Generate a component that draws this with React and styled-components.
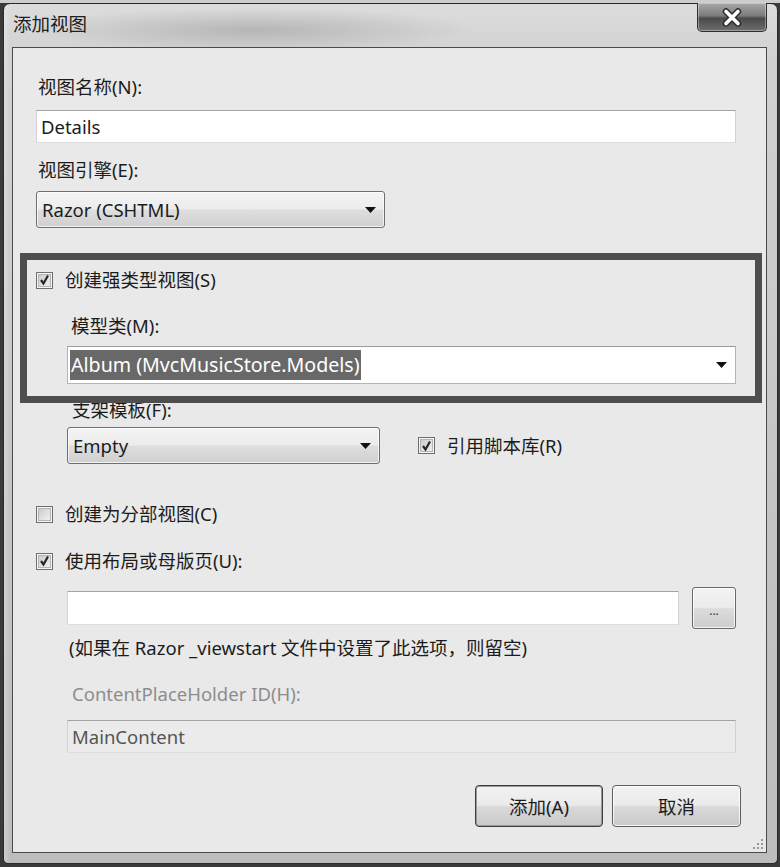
import React from 'react';
import styled, { createGlobalStyle } from 'styled-components';

const Global = createGlobalStyle`
  html, body { margin: 0; padding: 0; }
  body {
    background: #3a3a3a;
    font-family: "Noto Sans", "Noto Sans CJK SC", sans-serif;
    color: #1c1c1c;
  }
  #root { width: 780px; height: 867px; }
`;

const FS = 18.5;

const Stage = styled.div`
  width: 780px;
  height: 867px;
  box-sizing: border-box;
  padding: 3px 2px 3px 3px;
  background: linear-gradient(180deg, #cdcdcd 0, #cdcdcd 3px, #3a3a3a 3px);
`;

const Window = styled.div`
  height: 100%;
  box-sizing: border-box;
  border: 1px solid #2a2a2a;
  border-radius: 7px 7px 5px 5px;
  background:
    radial-gradient(ellipse 220px 22px at 250px 26px, rgba(120,120,120,0.35), rgba(120,120,120,0) 100%),
    linear-gradient(90deg, rgba(255,255,255,0.25) 0, rgba(0,0,0,0) 6px),
    linear-gradient(180deg, #dcdcdc 0%, #d2d2d2 6%, #c4c4c4 60%, #bdbdbd 100%);
  padding: 0 10px 10px 8px;
  display: flex;
  flex-direction: column;
`;

const TitleBar = styled.div`
  height: 43px;
  display: flex;
  align-items: flex-start;
  flex-shrink: 0;
`;

const TitleText = styled.div`
  padding: 8px 0 0 1px;
  font-size: ${FS}px;
  line-height: 24px;
  color: #202020;
`;

const CloseBtn = styled.div`
  margin-left: auto;
  margin-top: -1px;
  width: 70px;
  height: 29px;
  box-sizing: border-box;
  border: 1px solid #2e2e2e;
  border-top: none;
  border-radius: 0 0 5px 5px;
  background: linear-gradient(180deg, #a8a8a8 0%, #7c7c7c 45%, #4a4a4a 55%, #6e6e6e 100%);
  box-shadow: inset 0 0 0 1px rgba(255,255,255,0.35);
  display: flex;
  align-items: center;
  justify-content: center;
`;

const Client = styled.div`
  flex: 1;
  position: relative;
  background: #e9e9e9;
  border: 1px solid #4a4a4a;
  padding: 27px 30px 25px 23px;
  display: flex;
  flex-direction: column;
`;

const Label = styled.div`
  margin-top: ${p => p.$mt || 0}px;
  padding-left: ${p => (p.$pl ?? 2)}px;
  font-size: ${FS}px;
  line-height: 24px;
  height: 24px;
  color: ${p => (p.$disabled ? '#8d8d8d' : '#1c1c1c')};
  white-space: nowrap;
`;

const TextBox = styled.div`
  margin-top: ${p => p.$mt || 0}px;
  height: ${p => p.$h || 33}px;
  width: ${p => (p.$w ? `${p.$w}px` : 'auto')};
  box-sizing: border-box;
  border: 1px solid #d2d2d2;
  border-top-color: #a3a3a3;
  border-bottom-color: #dedede;
  background: ${p => (p.$disabled ? '#ebebeb' : '#ffffff')};
  color: ${p => (p.$disabled ? '#555555' : '#1c1c1c')};
  font-size: ${FS}px;
  display: flex;
  align-items: center;
  padding-left: 4px;
  flex-shrink: 0;
`;

const DropDown = styled.div`
  margin-top: ${p => p.$mt || 0}px;
  width: ${p => p.$w}px;
  height: 37px;
  box-sizing: border-box;
  border: 1px solid #6f6f6f;
  border-radius: 3px;
  background: linear-gradient(180deg, #f4f4f4 0%, #ececec 48%, #dedede 52%, #cfcfcf 100%);
  box-shadow: inset 0 0 0 1px rgba(255,255,255,0.7);
  display: flex;
  align-items: center;
  padding: 0 8px 0 5px;
  font-size: ${FS}px;
  color: #1c1c1c;
  flex-shrink: 0;
`;

const Combo = styled.div`
  margin-top: ${p => p.$mt || 0}px;
  height: 38px;
  box-sizing: border-box;
  border: 1px solid #b4b4b4;
  border-top-color: #9a9a9a;
  background: #ffffff;
  display: flex;
  align-items: center;
  padding: 2px 8px 2px 2px;
  font-size: 19.6px;
`;

const Selected = styled.span`
  background: #686868;
  color: #ffffff;
  height: 30px;
  line-height: 30px;
  padding: 0 1px;
`;

const Grow = styled.span`
  flex: 1;
`;

const ArrowSvg = styled.svg`
  display: block;
  flex-shrink: 0;
`;

const Arrow = () => (
  <ArrowSvg width="11" height="6" viewBox="0 0 11 6">
    <polygon points="0,0 11,0 5.5,6" fill="#111" />
  </ArrowSvg>
);

const CheckRow = styled.div`
  margin-top: ${p => p.$mt || 0}px;
  height: 24px;
  display: flex;
  align-items: center;
  gap: 12px;
  font-size: ${FS}px;
  line-height: 24px;
  white-space: nowrap;
  flex-shrink: 0;
`;

const Box = styled.span`
  width: 17px;
  height: 17px;
  box-sizing: border-box;
  border: 1px solid #6e6e6e;
  background: linear-gradient(135deg, #c4c4c4 0%, #e4e4e4 60%, #f2f2f2 100%);
  box-shadow: inset 0 0 0 1px #f6f6f6, inset 0 0 0 2px #b4b4b4;
  display: flex;
  align-items: center;
  justify-content: center;
  flex-shrink: 0;
`;

const CheckBox = ({ checked, children, ...rest }) => (
  <CheckRow {...rest}>
    <Box>
      {checked && (
        <svg width="11" height="12" viewBox="0 0 11 12">
          <path d="M2 6 L4.5 9.5 L9 1.5" fill="none" stroke="#262626" strokeWidth="2.2" />
        </svg>
      )}
    </Box>
    <span>{children}</span>
  </CheckRow>
);

const Section = styled.div`
  position: relative;
  margin-top: ${p => p.$mt || 0}px;
  display: flex;
  flex-direction: column;
`;

const Indent = styled.div`
  padding-left: 31px;
  display: flex;
  flex-direction: column;
`;

const Frame = styled.div`
  position: absolute;
  left: -16px;
  right: -26px;
  top: -15px;
  bottom: -19px;
  border: 7px solid #4e4e4e;
  pointer-events: none;
  z-index: 2;
`;

const Row = styled.div`
  margin-top: ${p => p.$mt || 0}px;
  display: flex;
  align-items: center;
  gap: ${p => p.$gap || 0}px;
`;

const SmallBtn = styled.div`
  width: 44px;
  height: 42px;
  box-sizing: border-box;
  border: 1px solid #6a6a6a;
  border-radius: 3px;
  background: linear-gradient(180deg, #f3f3f3 0%, #ececec 48%, #dcdcdc 52%, #cdcdcd 100%);
  box-shadow: inset 0 0 0 1px rgba(255,255,255,0.75);
  display: flex;
  align-items: center;
  justify-content: center;
  font-size: 12px;
  padding-top: 4px;
  color: #333;
  flex-shrink: 0;
`;

const Buttons = styled.div`
  margin-top: auto;
  margin-right: -5px;
  display: flex;
  justify-content: flex-end;
  gap: 9px;
`;

const Button = styled.div`
  width: ${p => p.$w}px;
  height: 42px;
  box-sizing: border-box;
  border: 1px solid ${p => (p.$default ? '#3e3e3e' : '#5e5e5e')};
  border-radius: 4px;
  background: linear-gradient(180deg, #f2f2f2 0%, #eaeaea 48%, #d9d9d9 52%, #c9c9c9 100%);
  box-shadow: inset 0 0 0 1px ${p => (p.$default ? '#9a9a9a' : 'rgba(255,255,255,0.8)')};
  display: flex;
  align-items: center;
  justify-content: center;
  font-size: ${FS}px;
  color: #1c1c1c;
`;

const Grip = styled.svg`
  position: absolute;
  right: 2px;
  bottom: 2px;
`;

export default function App() {
  return (
    <Stage>
      <Global />
      <Window>
        <TitleBar>
          <TitleText>添加视图</TitleText>
          <CloseBtn>
            <svg width="22" height="19" viewBox="0 0 22 19">
              <path d="M5 3.5 L17 15.5 M17 3.5 L5 15.5" stroke="#2a2a2a" strokeWidth="6.5" strokeLinecap="round" fill="none" />
              <path d="M5 3.5 L17 15.5 M17 3.5 L5 15.5" stroke="#ffffff" strokeWidth="3.6" strokeLinecap="round" fill="none" />
            </svg>
          </CloseBtn>
        </TitleBar>
        <Client>
          <Label>视图名称(N):</Label>
          <TextBox $mt={11}>Details</TextBox>
          <Label $mt={15}>视图引擎(E):</Label>
          <DropDown $mt={9} $w={349}>
            <span>Razor (CSHTML)</span>
            <Grow />
            <Arrow />
          </DropDown>

          <Section $mt={40}>
            <CheckBox checked>创建强类型视图(S)</CheckBox>
            <Indent>
              <Label $mt={22} $pl={4}>模型类(M):</Label>
              <Combo $mt={8}>
                <Selected>Album (MvcMusicStore.Models)</Selected>
                <Grow />
                <Arrow />
              </Combo>
            </Indent>
            <Frame />
          </Section>

          <Indent>
            <Label $mt={14} $pl={5}>支架模板(F):</Label>
            <Row $mt={5} $gap={38}>
              <DropDown $w={313}>
                <span>Empty</span>
                <Grow />
                <Arrow />
              </DropDown>
              <CheckBox checked>引用脚本库(R)</CheckBox>
            </Row>
          </Indent>

          <CheckBox $mt={38}>创建为分部视图(C)</CheckBox>
          <CheckBox $mt={23} checked>使用布局或母版页(U):</CheckBox>

          <Indent>
            <Row $mt={14} $gap={13}>
              <TextBox $w={612} $h={34} />
              <SmallBtn>...</SmallBtn>
            </Row>
            <Label $mt={7} $pl={2}>(如果在 Razor _viewstart 文件中设置了此选项，则留空)</Label>
            <Label $mt={22} $pl={5} $disabled>ContentPlaceHolder ID(H):</Label>
            <TextBox $mt={14} $disabled>MainContent</TextBox>
          </Indent>

          <Buttons>
            <Button $w={128} $default>添加(A)</Button>
            <Button $w={129}>取消</Button>
          </Buttons>

          <Grip width="12" height="12" viewBox="0 0 12 12">
            {[[10, 2], [10, 6], [6, 6], [10, 10], [6, 10], [2, 10]].map(([x, y]) => (
              <rect key={`${x}-${y}`} x={x - 1} y={y - 1} width="2" height="2" fill="#9a9a9a" />
            ))}
          </Grip>
        </Client>
      </Window>
    </Stage>
  );
}
